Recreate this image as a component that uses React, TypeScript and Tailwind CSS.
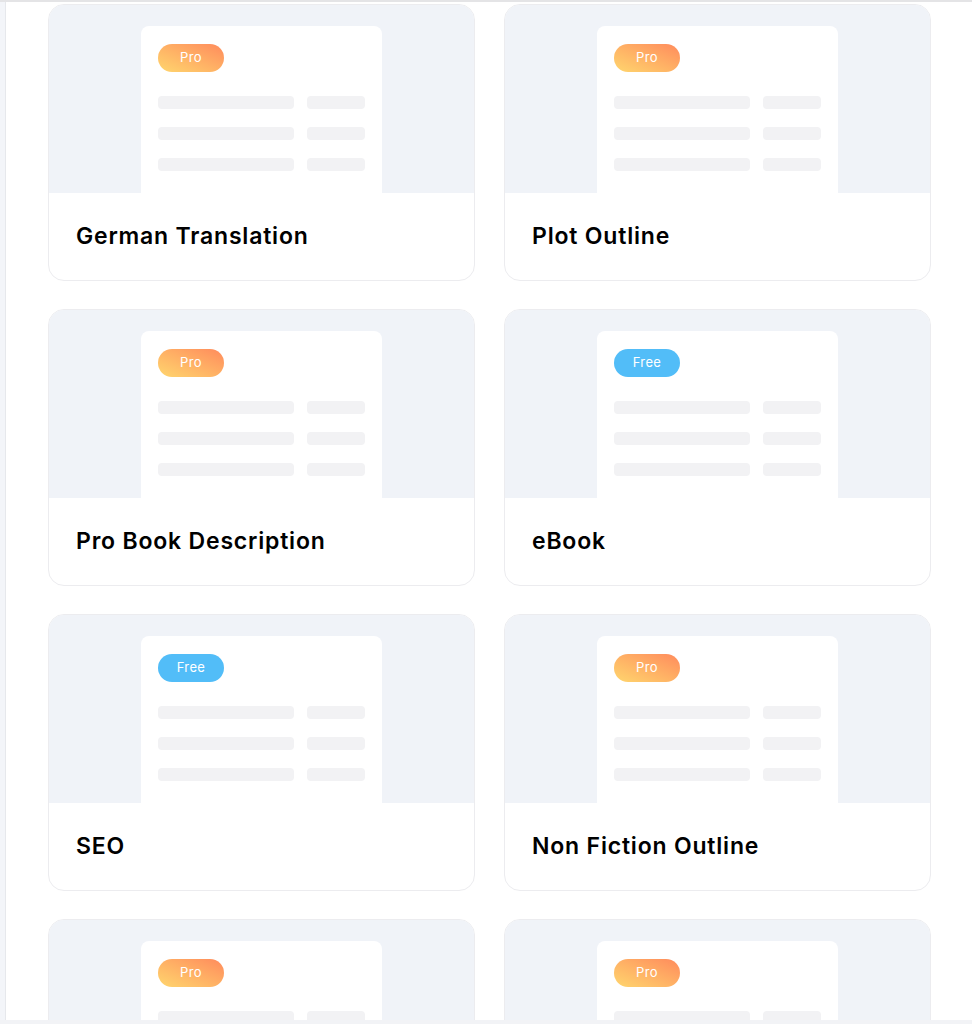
const templates = [
  { title: "German Translation", tier: "Pro" },
  { title: "Plot Outline", tier: "Pro" },
  { title: "Pro Book Description", tier: "Pro" },
  { title: "eBook", tier: "Free" },
  { title: "SEO", tier: "Free" },
  { title: "Non Fiction Outline", tier: "Pro" },
  { title: "Blog Post", tier: "Pro" },
  { title: "Chapter Summary", tier: "Pro" },
];

function TierBadge({ tier }: { tier: string }) {
  const cls =
    tier === "Pro"
      ? "bg-gradient-to-tr from-[#ffd66e] to-[#ff8a5c]"
      : "bg-[#52bdf8]";
  return (
    <span className={`flex h-[28px] w-[66px] items-center justify-center rounded-full text-[13px] tracking-[0.03em] text-white ${cls}`}>
      {tier}
    </span>
  );
}

function TemplateCard({ title, tier }: { title: string; tier: string }) {
  return (
    <div className="h-[277px] overflow-hidden rounded-2xl border border-[#ececef] bg-white">
      <div className="flex h-[188px] justify-center bg-[#f0f3f8] pt-[21px]">
        <div className="w-[241px] rounded-t-lg bg-white px-[17px] pt-[18px]">
          <TierBadge tier={tier} />
          <div className="mt-[24px] flex flex-col gap-[18px]">
            {[0, 1, 2].map((i) => (
              <div key={i} className="flex gap-[13px]">
                <div className="h-[13px] w-[136px] rounded-sm bg-[#f2f2f4]" />
                <div className="h-[13px] w-[58px] rounded-sm bg-[#f2f2f4]" />
              </div>
            ))}
          </div>
        </div>
      </div>
      <div className="flex h-[88px] items-center px-[27px] pb-[2px]">
        <h3 className="text-[23px] font-semibold tracking-[0.035em] text-black">{title}</h3>
      </div>
    </div>
  );
}

export default function App() {
  return (
    <div className="flex h-screen flex-col overflow-hidden bg-white font-['Inter',sans-serif]">
      <div className="h-[2px] bg-[#e4e4e6]" />
      <div className="flex min-h-0 flex-1">
        <div className="w-[5px] bg-[#f3f5f9]" />
        <div className="w-px bg-[#e6e8ec]" />
        <main className="min-h-0 flex-1 overflow-hidden pl-[42px] pr-[41px] pt-[2px]">
          <div className="grid grid-cols-2 gap-x-[29px] gap-y-[28px]">
            {templates.map((t) => (
              <TemplateCard key={t.title} title={t.title} tier={t.tier} />
            ))}
          </div>
        </main>
      </div>
      <div className="h-[4px] bg-[#f2f3f6]" />
    </div>
  );
}
